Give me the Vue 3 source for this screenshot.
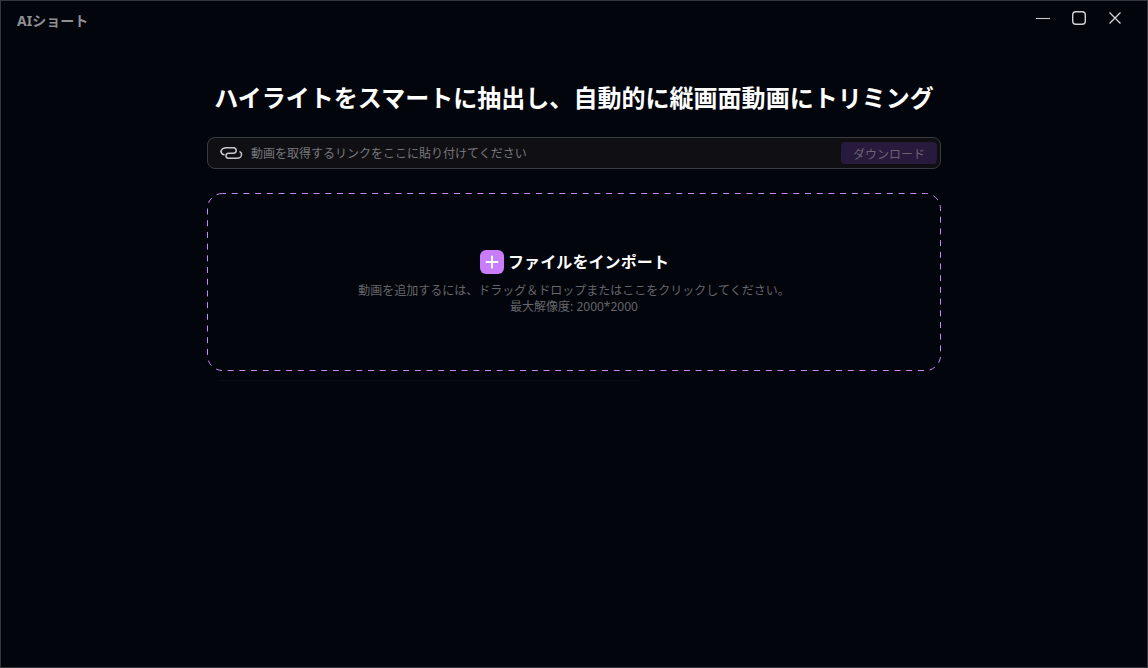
<script setup>
const title = 'ハイライトをスマートに抽出し、自動的に縦画面動画にトリミング'
</script>

<template>
  <div class="window">
    <header class="titlebar">
      <span class="app-name">AIショート</span>
      <div class="controls">
        <svg width="16" height="16" viewBox="0 0 16 16" fill="none" stroke="#c8c8cc" stroke-width="1.1"><path d="M1 8.5h14" /></svg>
        <svg width="16" height="16" viewBox="0 0 16 16" fill="none" stroke="#d4d4d8" stroke-width="1.4"><rect x="1.7" y="1.7" width="12.6" height="12.6" rx="3.2" /></svg>
        <svg width="16" height="16" viewBox="0 0 16 16" fill="none" stroke="#d4d4d8" stroke-width="1.3"><path d="M2.5 2.5l11 11M13.5 2.5l-11 11" /></svg>
      </div>
    </header>
    <main class="content">
      <h1 class="headline">{{ title }}</h1>
      <div class="link-bar">
        <svg class="link-icon" width="24" height="16" viewBox="0 0 24 16" fill="none" stroke="#c8c8cc" stroke-width="1.5" stroke-linecap="round">
          <path d="M2 6.2C2.6 4.2 4.8 2.8 7.5 2.8H14.3C16 2.8 17.2 4 17.2 5.6S16 8.3 14.3 8.3H9.5C8 8.3 7 9.4 7 10.8S8 13.3 9.5 13.3H18C20.6 13.3 22.6 11.5 22.6 9.3C22.6 8.2 22 7.4 21 6.9" />
          <path d="M2 6.2C2 8 3.4 9.4 5 9.8" />
        </svg>
        <span class="placeholder">動画を取得するリンクをここに貼り付けてください</span>
        <button class="download" type="button">ダウンロード</button>
      </div>
      <section class="dropzone">
        <svg class="dash" width="100%" height="100%" fill="none">
          <rect x="0.5" y="0.5" width="733" height="177" rx="15" stroke="#c98af5" stroke-width="1" stroke-dasharray="6 5.7" stroke-dashoffset="-9.2" />
        </svg>
        <div class="import-row">
          <span class="plus">
            <svg width="14" height="14" viewBox="0 0 14 14" fill="none" stroke="#fff" stroke-width="2"><path d="M7 .7v12.6M.7 7h12.6" /></svg>
          </span>
          <span class="import-text">ファイルをインポート</span>
        </div>
        <p class="hint">動画を追加するには、ドラッグ＆ドロップまたはここをクリックしてください。</p>
        <p class="hint">最大解像度: 2000*2000</p>
      </section>
      <div class="rule"></div>
    </main>
  </div>
</template>

<style>
html, body { margin: 0; background: #02050c; }
</style>

<style scoped>
.window {
  box-sizing: border-box;
  width: 1148px;
  height: 668px;
  background: #02050c;
  border: 1px solid #36373c;
  font-family: "Noto Sans", "Noto Sans CJK JP", sans-serif;
  display: flex;
  flex-direction: column;
}
.titlebar {
  height: 40px;
  flex: none;
  display: flex;
  justify-content: space-between;
  align-items: flex-start;
  padding: 0 24px 0 16px;
}
.app-name {
  margin-top: 10px;
  font-size: 14px;
  line-height: 20px;
  font-weight: 700;
  color: #8f8f94;
}
.controls {
  display: flex;
  gap: 20px;
  margin-top: 9px;
}
.content {
  width: 734px;
  margin: 0 auto;
}
.headline {
  margin: 39px 0 0;
  font-size: 24px;
  line-height: 36px;
  font-weight: 700;
  letter-spacing: 0.03px;
  color: #fff;
  text-align: center;
  white-space: nowrap;
}
.link-bar {
  box-sizing: border-box;
  margin-top: 21px;
  height: 32px;
  display: flex;
  align-items: center;
  padding: 0 3px 0 11px;
  background: #101014;
  border: 1px solid #3b3c40;
  border-radius: 8px;
}
.link-icon { flex: none; }
.placeholder {
  margin-left: 8px;
  padding-top: 2px;
  font-size: 12px;
  line-height: 16px;
  color: #77777c;
  flex: 1;
}
.download {
  width: 96px;
  height: 22px;
  padding: 2px 0 0;
  border: 0;
  border-radius: 4px;
  background: #271a3c;
  color: #6c6476;
  font-family: inherit;
  font-size: 12px;
}
.dropzone {
  position: relative;
  box-sizing: border-box;
  margin-top: 24px;
  height: 178px;
  padding-top: 57px;
  text-align: center;
}
.dash { position: absolute; left: 0; top: 0; }
.import-row {
  display: flex;
  justify-content: center;
  align-items: center;
  gap: 4px;
  height: 24px;
  padding-left: 1px;
}
.plus {
  width: 24px;
  height: 24px;
  border-radius: 6px;
  background: #c97cfb;
  display: flex;
  align-items: center;
  justify-content: center;
}
.import-text {
  font-size: 16px;
  line-height: 24px;
  font-weight: 700;
  letter-spacing: 0.1px;
  color: #fff;
}
.hint {
  margin: 0;
  font-size: 12px;
  line-height: 16px;
  color: #66666b;
}
.import-row + .hint { margin-top: 9px; }
.rule {
  margin: 9px 0 0 12px;
  width: 421px;
  height: 1px;
  background: #0b0c17;
}
</style>
